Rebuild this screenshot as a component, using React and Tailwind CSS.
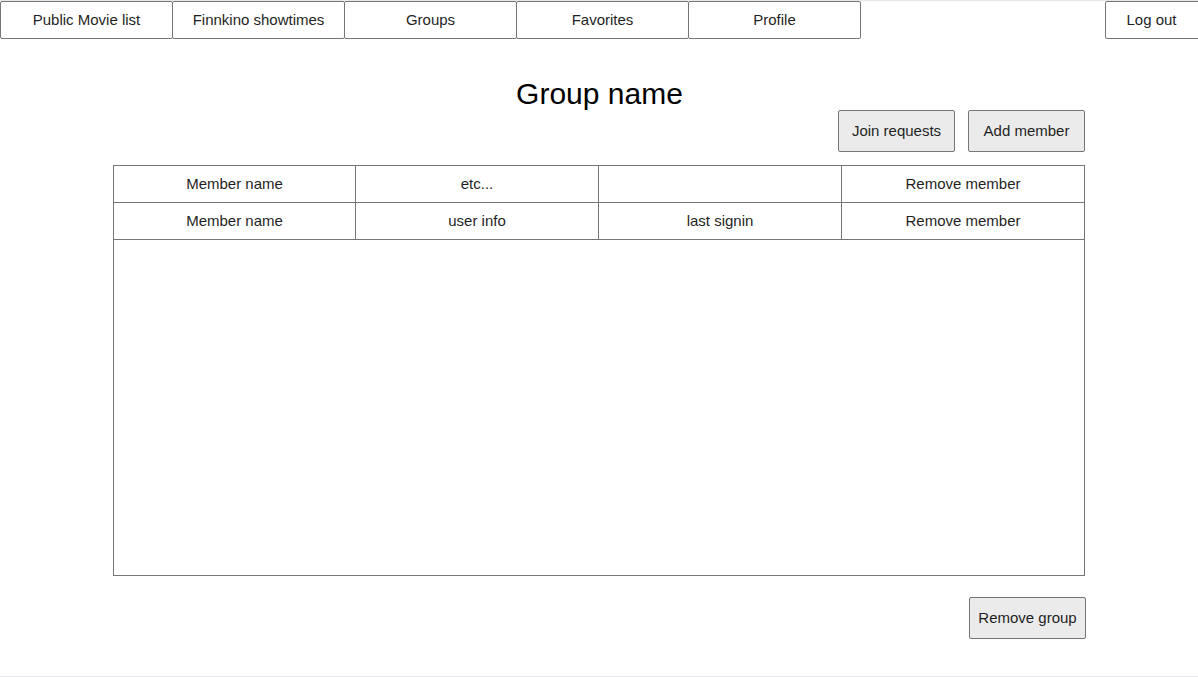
import React from 'react';

const tabs = ['Public Movie list', 'Finnkino showtimes', 'Groups', 'Favorites', 'Profile'];

const rows = [
    ['Member name', 'etc...', '', 'Remove member'],
    ['Member name', 'user info', 'last signin', 'Remove member'],
];

const App = () => {
    return (
        <div
            className="w-[1198px] h-[677px] bg-white border-y border-[#e5e7eb] text-[15px] text-[#1f1f1f] overflow-hidden"
            style={{ fontFamily: '"Liberation Sans", Arial, sans-serif' }}
        >
            {/* Top navigation */}
            <nav className="flex justify-between">
                <div className="flex">
                    {tabs.map((tab, i) => (
                        <button
                            key={tab}
                            className={`w-[173px] h-[38px] bg-white border border-[#767676] rounded-[2px] flex items-center justify-center ${i > 0 ? '-ml-px' : ''}`}
                        >
                            {tab}
                        </button>
                    ))}
                </div>
                <button className="w-[97px] h-[38px] -mr-[4px] bg-white border border-[#767676] rounded-[2px] flex items-center justify-center pr-[4px]">
                    Log out
                </button>
            </nav>

            <main className="w-[973px] ml-[113px]">
                <h1 className="text-center text-[30px] leading-none mt-[40px] text-black">Group name</h1>

                <div className="w-[972px] flex justify-end gap-[13px] mt-[1px]">
                    <button className="w-[117px] h-[42px] bg-[#ebebeb] border border-[#767676] rounded-[2px]">
                        Join requests
                    </button>
                    <button className="w-[117px] h-[42px] bg-[#ebebeb] border border-[#767676] rounded-[2px]">
                        Add member
                    </button>
                </div>

                {/* Members table */}
                <div className="mt-[13px] w-[972px]">
                    {rows.map((row, i) => (
                        <div key={i} className={`grid grid-cols-4 h-[38px] ${i > 0 ? '-mt-px' : ''}`}>
                            {row.map((cell, j) => (
                                <div
                                    key={j}
                                    className={`border border-[#767676] flex items-center justify-center ${j > 0 ? '-ml-px' : ''}`}
                                >
                                    {cell}
                                </div>
                            ))}
                        </div>
                    ))}
                    <div className="h-[337px] -mt-px border border-[#767676]"></div>
                </div>

                <div className="flex justify-end mt-[21px]">
                    <button className="w-[117px] h-[42px] bg-[#ebebeb] border border-[#767676] rounded-[2px]">
                        Remove group
                    </button>
                </div>
            </main>
        </div>
    );
};

export default App;
